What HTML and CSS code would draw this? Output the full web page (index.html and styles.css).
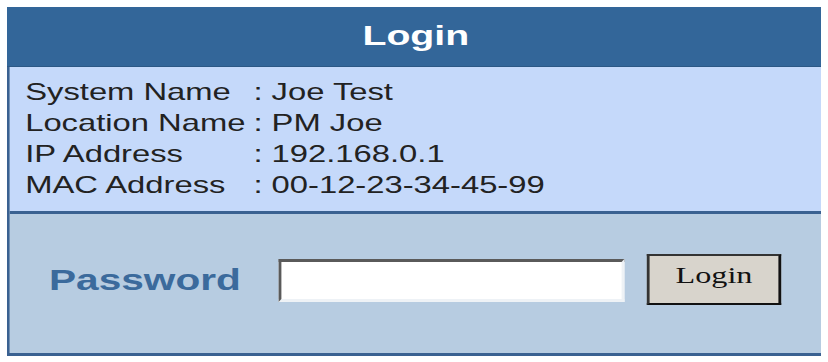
FILE: index.html
```html
<!DOCTYPE html>
<html lang="en">

<head>
    <meta charset="UTF-8">
    <meta name="viewport" content="width=device-width, initial-scale=1.0">
    <title>Login</title>
    <link rel="stylesheet" href="styles.css">
</head>

<body>

    <div class="loginBox">
        <div class="boxTitle">Login</div>

        <!-- system info -->
        <div class="sysInfo">
            <div class="label">System Name</div><div class="value">: Joe Test</div>
            <div class="label">Location Name</div><div class="value">: PM Joe</div>
            <div class="label">IP Address</div><div class="value">: 192.168.0.1</div>
            <div class="label">MAC Address</div><div class="value">: 00-12-23-34-45-99</div>
        </div>

        <!-- password form -->
        <form class="loginForm" onsubmit="return false;">
            <label class="pwLabel" for="pw">Password</label>
            <input class="pwInput" type="password" id="pw" name="pw">
            <button class="loginBtn" type="submit">Login</button>
        </form>
    </div>

</body>

</html>
```

FILE: styles.css
```css
* {margin: 0; padding: 0; box-sizing: border-box;}
body {margin: 7px; background: #fff; font-family: "Liberation Sans", Arial, sans-serif;}

/* the old page is stretched sideways, so the whole box is drawn narrow and widened */
.loginBox {width: 584px; height: 349px; transform: scaleX(1.4); transform-origin: 0 0; border: 2px solid #3a6191; border-top: 0; border-bottom-width: 3px; display: flex; flex-direction: column;}

.boxTitle {height: 60px; margin: 0 -2px; background: #336699; border-bottom: 1px solid #2c5885; color: #fff; font-size: 28px; font-weight: bold; line-height: 58px; text-align: center;}

.sysInfo {height: 144px; padding: 10px 0 0 11px; background: #c5d9fa; display: grid; grid-template-columns: 163px 1fr; grid-auto-rows: 31px; align-items: center; color: #222; font-size: 23.4px;}
.sysInfo .label {white-space: nowrap;}

.loginForm {flex: 1; padding: 0 0 6px 28px; background: #b7cce1; border-top: 3px solid #3a6191; display: flex; align-items: center;}
.pwLabel {width: 164px; flex: none; color: #3b6a9c; font-size: 29px; font-weight: bold;}
.pwInput {width: 247px; height: 43px; background: #fff; border: 3px solid; border-left-width: 2px; border-right-width: 2px; border-color: #5a5a5a #eef2f6 #eef2f6 #5a5a5a; outline: none;}
.loginBtn {width: 96px; height: 51px; margin: -3px 0 0 16px; background: #d8d4cc; border: 2px solid #111; border-top-color: #333; border-left-color: #333; color: #111; font-family: "Liberation Serif", "Times New Roman", serif; font-size: 23px; padding-bottom: 6px;}
```
